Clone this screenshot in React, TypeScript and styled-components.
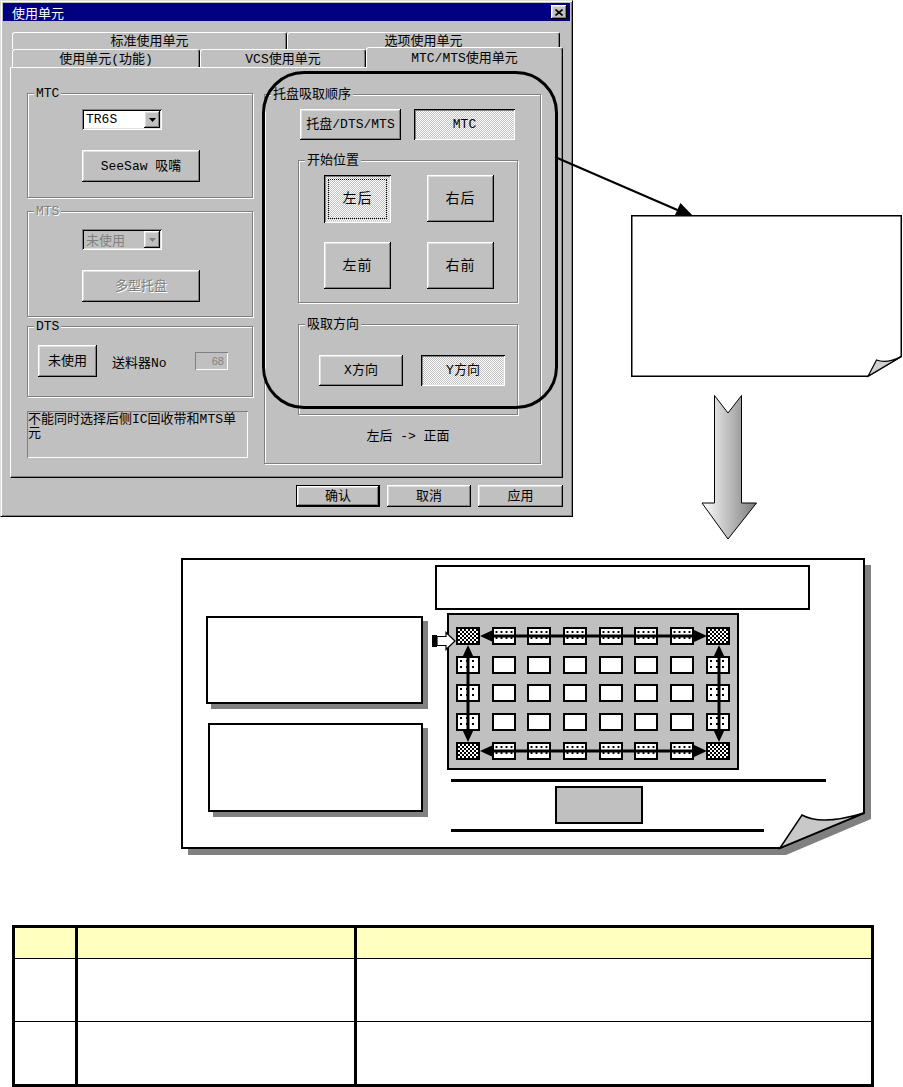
import styled, { createGlobalStyle } from "styled-components";

const UI_FONT = `"Liberation Mono", "Noto Sans CJK SC", monospace`;

const GlobalStyle = createGlobalStyle`
  html, body {
    margin: 0;
    padding: 0;
    background: #fff;
  }
  body {
    font-family: ${UI_FONT};
  }
`;

const raised = `inset -1px -1px #000, inset 1px 1px #fff, inset -2px -2px #808080, inset 2px 2px #dfdfdf`;
const sunken = `inset 1px 1px #000, inset -1px -1px #fff, inset 2px 2px #808080, inset -2px -2px #dfdfdf`;
const dither = `repeating-conic-gradient(#fff 0 25%, #c0c0c0 0 50%) 0 0 / 2px 2px`;

const Page = styled.div`
  position: relative;
  width: 903px;
  height: 1087px;
  overflow: hidden;
`;

const TopSection = styled.div`
  position: relative;
  display: flex;
  height: 558px;
`;

/* ---------- dialog ---------- */

const Dialog = styled.div`
  box-sizing: border-box;
  width: 573px;
  height: 517px;
  padding: 2px;
  background: #c0c0c0;
  border: 1px solid;
  border-color: #dfdfdf #000 #000 #dfdfdf;
  box-shadow: inset 1px 1px #fff, inset -1px -1px #808080;
  display: flex;
  flex-direction: column;
  font-family: ${UI_FONT};
  font-size: 13px;
  color: #000;
`;

const TitleBar = styled.div`
  height: 18px;
  flex-shrink: 0;
  background: #000080;
  color: #fff;
  display: flex;
  align-items: center;
  justify-content: space-between;
  padding: 0 3px 0 9px;
  font-family: "Noto Sans CJK SC", sans-serif;
  font-size: 13px;
`;

const CloseButton = styled.div`
  width: 16px;
  height: 14px;
  background: #c0c0c0;
  box-shadow: ${raised};
  display: flex;
  align-items: center;
  justify-content: center;
`;

const TabStrip = styled.div`
  margin: 11px 0 0 7px;
  width: 553px;
  display: flex;
  flex-direction: column;
`;

const TabRow = styled.div<{ $h: number }>`
  display: flex;
  align-items: flex-end;
  height: ${(p) => p.$h}px;
  padding-left: 2px;
`;

const Tab = styled.div<{ $w: number; $active?: boolean }>`
  box-sizing: border-box;
  width: ${(p) => p.$w}px;
  height: ${(p) => (p.$active ? "21px" : "100%")};
  margin-bottom: ${(p) => (p.$active ? "-1px" : "0")};
  position: relative;
  z-index: ${(p) => (p.$active ? 1 : 0)};
  background: #c0c0c0;
  border-top: 1px solid #fff;
  border-left: 1px solid #fff;
  border-right: 1px solid #000;
  box-shadow: inset -1px 0 #808080;
  border-radius: 3px 3px 0 0;
  display: flex;
  align-items: center;
  justify-content: center;
  line-height: 1;
  padding-top: 1px;
`;

const TabPanel = styled.div`
  box-sizing: border-box;
  width: 553px;
  height: 411px;
  border: 1px solid;
  border-color: #fff #000 #000 #fff;
  box-shadow: inset -1px -1px #808080;
  display: flex;
  align-items: flex-start;
  padding: 24px 0 0 16px;
`;

const LeftColumn = styled.div`
  width: 226px;
  display: flex;
  flex-direction: column;
`;

const GroupBox = styled.div<{ $w: number; $h: number; $mt?: number; $ml?: number }>`
  position: relative;
  box-sizing: border-box;
  flex-shrink: 0;
  width: ${(p) => p.$w}px;
  height: ${(p) => p.$h}px;
  margin-top: ${(p) => p.$mt ?? 0}px;
  margin-left: ${(p) => p.$ml ?? 0}px;
  border: 1px solid #808080;
  box-shadow: inset 1px 1px #fff, 1px 1px #fff;
`;

const Legend = styled.span<{ $disabled?: boolean }>`
  position: absolute;
  top: -8px;
  left: 6px;
  padding: 0 2px;
  background: #c0c0c0;
  line-height: 15px;
  color: ${(p) => (p.$disabled ? "#808080" : "#000")};
  text-shadow: ${(p) => (p.$disabled ? "1px 1px #fff" : "none")};
`;

const StackedControls = styled.div<{ $pt: number }>`
  display: flex;
  flex-direction: column;
  align-items: flex-start;
  gap: 20px;
  padding: ${(p) => p.$pt}px 0 0 54px;
`;

const Combo = styled.div<{ $disabled?: boolean }>`
  box-sizing: border-box;
  width: 80px;
  height: 21px;
  display: flex;
  align-items: center;
  justify-content: space-between;
  padding: 2px 2px 2px 4px;
  background: ${(p) => (p.$disabled ? "#c0c0c0" : "#fff")};
  color: ${(p) => (p.$disabled ? "#808080" : "#000")};
  box-shadow: inset 1px 1px #808080, inset -1px -1px #fff, inset 2px 2px #000,
    inset -2px -2px #dfdfdf;
`;

const ComboArrow = styled.div`
  width: 16px;
  height: 17px;
  background: #c0c0c0;
  box-shadow: ${raised};
  display: flex;
  align-items: center;
  justify-content: center;
`;

const Button = styled.button<{
  $w: number;
  $h: number;
  $pressed?: boolean;
  $isDefault?: boolean;
  $focus?: boolean;
}>`
  position: relative;
  box-sizing: border-box;
  width: ${(p) => p.$w}px;
  height: ${(p) => p.$h}px;
  padding: 0;
  margin: 0;
  border: ${(p) => (p.$isDefault ? "1px solid #000" : "none")};
  background: ${(p) => (p.$pressed ? dither : "#c0c0c0")};
  box-shadow: ${(p) => (p.$pressed ? sunken : raised)};
  font-family: ${UI_FONT};
  font-size: 13px;
  color: #000;
  line-height: 1;
  &:disabled {
    color: #808080;
    text-shadow: 1px 1px #fff;
  }
  ${(p) =>
    p.$focus &&
    `&::after {
      content: "";
      position: absolute;
      inset: 4px;
      border: 1px dotted #000;
    }`}
`;

const BigLabel = styled.span`
  font-size: 14px;
  letter-spacing: 1px;
`;

const DtsRow = styled.div`
  display: flex;
  align-items: center;
  padding: 18px 24px 0 10px;
`;

const FieldLabel = styled.span`
  margin-left: 15px;
`;

const NumField = styled.div`
  box-sizing: border-box;
  margin-left: auto;
  width: 33px;
  height: 18px;
  padding-right: 4px;
  display: flex;
  align-items: center;
  justify-content: flex-end;
  box-shadow: inset 1px 1px #808080, inset -1px -1px #fff;
  font-family: "Liberation Sans", sans-serif;
  font-size: 11px;
  color: #808080;
`;

const MessageBox = styled.div`
  box-sizing: border-box;
  width: 221px;
  height: 47px;
  margin-top: 14px;
  padding: 2px 1px;
  box-shadow: inset 1px 1px #808080, inset -1px -1px #fff;
  font-size: 13px;
  line-height: 14px;
`;

const OrderBody = styled.div`
  display: flex;
  flex-direction: column;
  align-items: flex-start;
  padding: 14px 0 0 33px;
`;

const ButtonPair = styled.div<{ $gap: number; $pt?: number; $pl?: number }>`
  display: flex;
  gap: ${(p) => p.$gap}px;
  padding: ${(p) => p.$pt ?? 0}px 0 0 ${(p) => p.$pl ?? 0}px;
`;

const PositionGrid = styled.div`
  display: grid;
  grid-template-columns: 67px 67px;
  grid-auto-rows: 47px;
  column-gap: 36px;
  row-gap: 20px;
  padding: 14px 0 0 25px;
`;

const Caption = styled.div`
  width: 220px;
  margin-top: 15px;
  text-align: center;
  line-height: 14px;
`;

const ButtonBar = styled.div`
  display: flex;
  justify-content: flex-end;
  gap: 7px;
  margin-top: 7px;
  padding-right: 7px;
`;

/* ---------- annotations ---------- */

const Callout = styled.div`
  position: absolute;
  left: 262px;
  top: 71px;
  width: 296px;
  height: 338px;
  box-sizing: border-box;
  border: 3px solid #000;
  border-radius: 42px;
  z-index: 2;
  pointer-events: none;
`;

const Overlay = styled.svg`
  position: absolute;
  left: 0;
  top: 0;
  z-index: 2;
  pointer-events: none;
`;

const NoteColumn = styled.div`
  display: flex;
  flex-direction: column;
  margin-left: 58px;
  padding-top: 215px;
`;

const NoteCard = styled.div`
  position: relative;
  z-index: 3;
  width: 271px;
  height: 162px;
`;

const ShapeLayer = styled.svg`
  position: absolute;
  left: 0;
  top: 0;
  overflow: visible;
`;

const DownArrow = styled.svg`
  margin: 18px 0 0 70px;
`;

/* ---------- paper diagram ---------- */

const PaperSection = styled.div`
  height: 298px;
`;

const Paper = styled.div`
  position: relative;
  margin-left: 181px;
  width: 684px;
  height: 291px;
`;

const PaperContent = styled.div`
  position: relative;
  display: flex;
  align-items: flex-start;
`;

const PaperLeft = styled.div`
  display: flex;
  flex-direction: column;
  padding: 58px 0 0 25px;
`;

const PaperRight = styled.div`
  display: flex;
  flex-direction: column;
  align-items: flex-start;
  margin-left: 12px;
  padding-top: 7px;
`;

const ShadowBox = styled.div<{ $w: number; $h: number; $ml?: number; $mt?: number }>`
  box-sizing: border-box;
  width: ${(p) => p.$w}px;
  height: ${(p) => p.$h}px;
  margin: ${(p) => p.$mt ?? 0}px 0 0 ${(p) => p.$ml ?? 0}px;
  background: #fff;
  border: 2px solid #000;
  box-shadow: 5px 5px 0 #808080;
`;

const TitleBox = styled.div`
  box-sizing: border-box;
  width: 375px;
  height: 45px;
  border: 2px solid #000;
  background: #fff;
`;

const Tray = styled.div`
  position: relative;
  box-sizing: border-box;
  width: 292px;
  height: 157px;
  margin: 3px 0 0 12px;
  padding: 12px 0 0 7px;
  background: #c0c0c0;
  border: 2px solid #000;
  display: grid;
  grid-template-columns: repeat(8, 24px);
  grid-auto-rows: 18px;
  column-gap: 11.7px;
  row-gap: 10.7px;
  align-content: start;
`;

type CellKind = "corner" | "hEdge" | "vEdge" | "inner";

const cellBackground: Record<CellKind, string> = {
  corner: "repeating-conic-gradient(#000 0 25%, #fff 0 50%) 0 0 / 4px 4px",
  hEdge: "radial-gradient(circle, #000 0 0.9px, transparent 1.3px) 0 0 / 5px 6px, #fff",
  vEdge: "radial-gradient(circle, #000 0 0.9px, transparent 1.3px) 0 0 / 6px 6px, #fff",
  inner: "#fff",
};

const Cell = styled.div<{ $kind: CellKind }>`
  box-sizing: border-box;
  border: 2px solid #000;
  background: ${(p) => cellBackground[p.$kind]};
`;

const TrayArrows = styled.svg`
  position: absolute;
  left: 0;
  top: 0;
  overflow: visible;
  pointer-events: none;
`;

const Rule = styled.div<{ $w: number; $mt: number }>`
  width: ${(p) => p.$w}px;
  height: 3px;
  margin: ${(p) => p.$mt}px 0 0 16px;
  background: #000;
`;

const LabelPlate = styled.div`
  box-sizing: border-box;
  width: 88px;
  height: 38px;
  margin: 4px 0 0 120px;
  border: 2px solid #000;
  background: #c0c0c0;
`;

/* ---------- table ---------- */

const InfoTable = styled.table`
  margin: 69px 0 0 12px;
  width: 862px;
  border-collapse: collapse;
  table-layout: fixed;
  border: 3px solid #000;
`;

const HeadCell = styled.th<{ $w?: number }>`
  ${(p) => (p.$w ? `width: ${p.$w}px;` : "")}
  height: 30px;
  padding: 0;
  background: #ffffc0;
  border-left: 3px solid #000;
  border-right: 3px solid #000;
  border-bottom: 1px solid #000;
`;

const BodyCell = styled.td`
  height: 62px;
  padding: 0;
  border-left: 3px solid #000;
  border-right: 3px solid #000;
  border-top: 1px solid #000;
`;

function cellKind(r: number, c: number): CellKind {
  const edgeRow = r === 0 || r === 4;
  const edgeCol = c === 0 || c === 7;
  if (edgeRow && edgeCol) return "corner";
  if (edgeRow) return "hEdge";
  if (edgeCol) return "vEdge";
  return "inner";
}

const HArrow = ({ y }: { y: number }) => (
  <g>
    <line x1={40} y1={y} x2={249} y2={y} stroke="#000" strokeWidth={3} />
    <polygon points={`31,${y} 44,${y - 6} 44,${y + 6}`} fill="#000" />
    <polygon points={`258,${y} 245,${y - 6} 245,${y + 6}`} fill="#000" />
  </g>
);

const VArrow = ({ x }: { x: number }) => (
  <g>
    <line x1={x} y1={39} x2={x} y2={118} stroke="#000" strokeWidth={3} />
    <polygon points={`${x},30 ${x - 6},43 ${x + 6},43`} fill="#000" />
    <polygon points={`${x},127 ${x - 6},114 ${x + 6},114`} fill="#000" />
  </g>
);

const ComboTriangle = ({ color }: { color: string }) => (
  <svg width="7" height="4" viewBox="0 0 7 4">
    <polygon points="0,0 7,0 3.5,4" fill={color} />
  </svg>
);

export default function App() {
  const cells = [];
  for (let r = 0; r < 5; r++) {
    for (let c = 0; c < 8; c++) {
      cells.push(<Cell key={`${r}-${c}`} $kind={cellKind(r, c)} />);
    }
  }

  return (
    <Page>
      <GlobalStyle />
      <TopSection>
        <Dialog>
          <TitleBar>
            <span>使用单元</span>
            <CloseButton>
              <svg width="8" height="7" viewBox="0 0 8 7">
                <path d="M0.5 0.5 L7.5 6.5 M7.5 0.5 L0.5 6.5" stroke="#000" strokeWidth="1.6" />
              </svg>
            </CloseButton>
          </TitleBar>

          <TabStrip>
            <TabRow $h={17}>
              <Tab $w={275}>标准使用单元</Tab>
              <Tab $w={273}>选项使用单元</Tab>
            </TabRow>
            <TabRow $h={18}>
              <Tab $w={188}>使用单元(功能)</Tab>
              <Tab $w={166}>VCS使用单元</Tab>
              <Tab $w={197} $active>
                MTC/MTS使用单元
              </Tab>
            </TabRow>
            <TabPanel>
              <LeftColumn>
                <GroupBox $w={226} $h={105} $mt={1}>
                  <Legend>MTC</Legend>
                  <StackedControls $pt={15}>
                    <Combo>
                      <span>TR6S</span>
                      <ComboArrow>
                        <ComboTriangle color="#000" />
                      </ComboArrow>
                    </Combo>
                    <Button $w={118} $h={32}>
                      SeeSaw 吸嘴
                    </Button>
                  </StackedControls>
                </GroupBox>

                <GroupBox $w={226} $h={106} $mt={13}>
                  <Legend $disabled>MTS</Legend>
                  <StackedControls $pt={17}>
                    <Combo $disabled>
                      <span>未使用</span>
                      <ComboArrow>
                        <ComboTriangle color="#808080" />
                      </ComboArrow>
                    </Combo>
                    <Button $w={118} $h={32} disabled>
                      多型托盘
                    </Button>
                  </StackedControls>
                </GroupBox>

                <GroupBox $w={226} $h={71} $mt={9}>
                  <Legend>DTS</Legend>
                  <DtsRow>
                    <Button $w={59} $h={32}>
                      未使用
                    </Button>
                    <FieldLabel>送料器No</FieldLabel>
                    <NumField>68</NumField>
                  </DtsRow>
                </GroupBox>

                <MessageBox>不能同时选择后侧IC回收带和MTS单元</MessageBox>
              </LeftColumn>

              <GroupBox $w={277} $h={370} $mt={2} $ml={11}>
                <Legend>托盘吸取顺序</Legend>
                <OrderBody>
                  <ButtonPair $gap={13} $pl={2}>
                    <Button $w={101} $h={31}>
                      托盘/DTS/MTS
                    </Button>
                    <Button $w={101} $h={31} $pressed>
                      MTC
                    </Button>
                  </ButtonPair>

                  <GroupBox $w={220} $h={143} $mt={20}>
                    <Legend>开始位置</Legend>
                    <PositionGrid>
                      <Button $w={67} $h={48} $pressed $focus>
                        <BigLabel>左后</BigLabel>
                      </Button>
                      <Button $w={67} $h={47}>
                        <BigLabel>右后</BigLabel>
                      </Button>
                      <Button $w={67} $h={47}>
                        <BigLabel>左前</BigLabel>
                      </Button>
                      <Button $w={67} $h={47}>
                        <BigLabel>右前</BigLabel>
                      </Button>
                    </PositionGrid>
                  </GroupBox>

                  <GroupBox $w={220} $h={91} $mt={21}>
                    <Legend>吸取方向</Legend>
                    <ButtonPair $gap={18} $pt={30} $pl={20}>
                      <Button $w={84} $h={31}>
                        X方向
                      </Button>
                      <Button $w={84} $h={31} $pressed>
                        Y方向
                      </Button>
                    </ButtonPair>
                  </GroupBox>

                  <Caption>左后 -&gt; 正面</Caption>
                </OrderBody>
              </GroupBox>
            </TabPanel>
          </TabStrip>

          <ButtonBar>
            <Button $w={84} $h={22} $isDefault>
              确认
            </Button>
            <Button $w={84} $h={22}>
              取消
            </Button>
            <Button $w={85} $h={22}>
              应用
            </Button>
          </ButtonBar>
        </Dialog>

        <Callout />
        <Overlay width="903" height="558">
          <line x1={555} y1={157} x2={682} y2={212} stroke="#000" strokeWidth={2} />
          <polygon points="697,220 673,219.6 680.4,203" fill="#000" />
        </Overlay>

        <NoteColumn>
          <NoteCard>
            <ShapeLayer width="271" height="162">
              <path
                d="M0.75 0.75 H270.25 V141.5 L237 161.25 H0.75 Z"
                fill="#fff"
                stroke="#000"
                strokeWidth="1.5"
              />
              <path
                d="M237 161.25 L245.5 145 Q256 149 270.25 141.5 Z"
                fill="#d0d0d0"
                stroke="#000"
                strokeWidth="1.2"
              />
            </ShapeLayer>
          </NoteCard>
          <DownArrow width="57" height="146" viewBox="0 0 57 146">
            <defs>
              <linearGradient id="downGrad" x1="0" x2="1" y1="0" y2="0">
                <stop offset="0" stopColor="#ffffff" />
                <stop offset="1" stopColor="#7a7a7a" />
              </linearGradient>
            </defs>
            <path
              d="M13.5 0.5 L27 18 L40.5 0.5 V108 H55.5 L27 144 L1 108 H13.5 Z"
              fill="url(#downGrad)"
              stroke="#000"
              strokeWidth="1"
            />
          </DownArrow>
        </NoteColumn>
      </TopSection>

      <PaperSection>
        <Paper>
          <ShapeLayer width="691" height="298">
            <path d="M7 7 H690 V261 L605 297 H7 Z" fill="#808080" />
            <path d="M1 1 H683 V255 L599 290 H1 Z" fill="#fff" stroke="#000" strokeWidth="2" />
            <path
              d="M599 290 L621 257 Q640 268 683 255 Z"
              fill="#c8c8c8"
              stroke="#000"
              strokeWidth="1.5"
            />
          </ShapeLayer>
          <PaperContent>
            <PaperLeft>
              <ShadowBox $w={217} $h={88} />
              <ShadowBox $w={215} $h={89} $ml={2} $mt={19} />
            </PaperLeft>
            <PaperRight>
              <TitleBox />
              <Tray>
                {cells}
                <TrayArrows width="288" height="153">
                  <rect x={-17} y={20} width={5} height={12} fill="#000" />
                  <path
                    d="M-12 21.5 H-3 V17.5 L6 26 L-3 34.5 V30.5 H-12 Z"
                    fill="#fff"
                    stroke="#000"
                    strokeWidth="1.2"
                  />
                  <HArrow y={21} />
                  <HArrow y={136} />
                  <VArrow x={19} />
                  <VArrow x={270} />
                </TrayArrows>
              </Tray>
              <Rule $w={375} $mt={9} />
              <LabelPlate />
              <Rule $w={313} $mt={5} />
            </PaperRight>
          </PaperContent>
        </Paper>
      </PaperSection>

      <InfoTable>
        <thead>
          <tr>
            <HeadCell $w={60} />
            <HeadCell $w={276} />
            <HeadCell />
          </tr>
        </thead>
        <tbody>
          <tr>
            <BodyCell />
            <BodyCell />
            <BodyCell />
          </tr>
          <tr>
            <BodyCell />
            <BodyCell />
            <BodyCell />
          </tr>
        </tbody>
      </InfoTable>
    </Page>
  );
}
